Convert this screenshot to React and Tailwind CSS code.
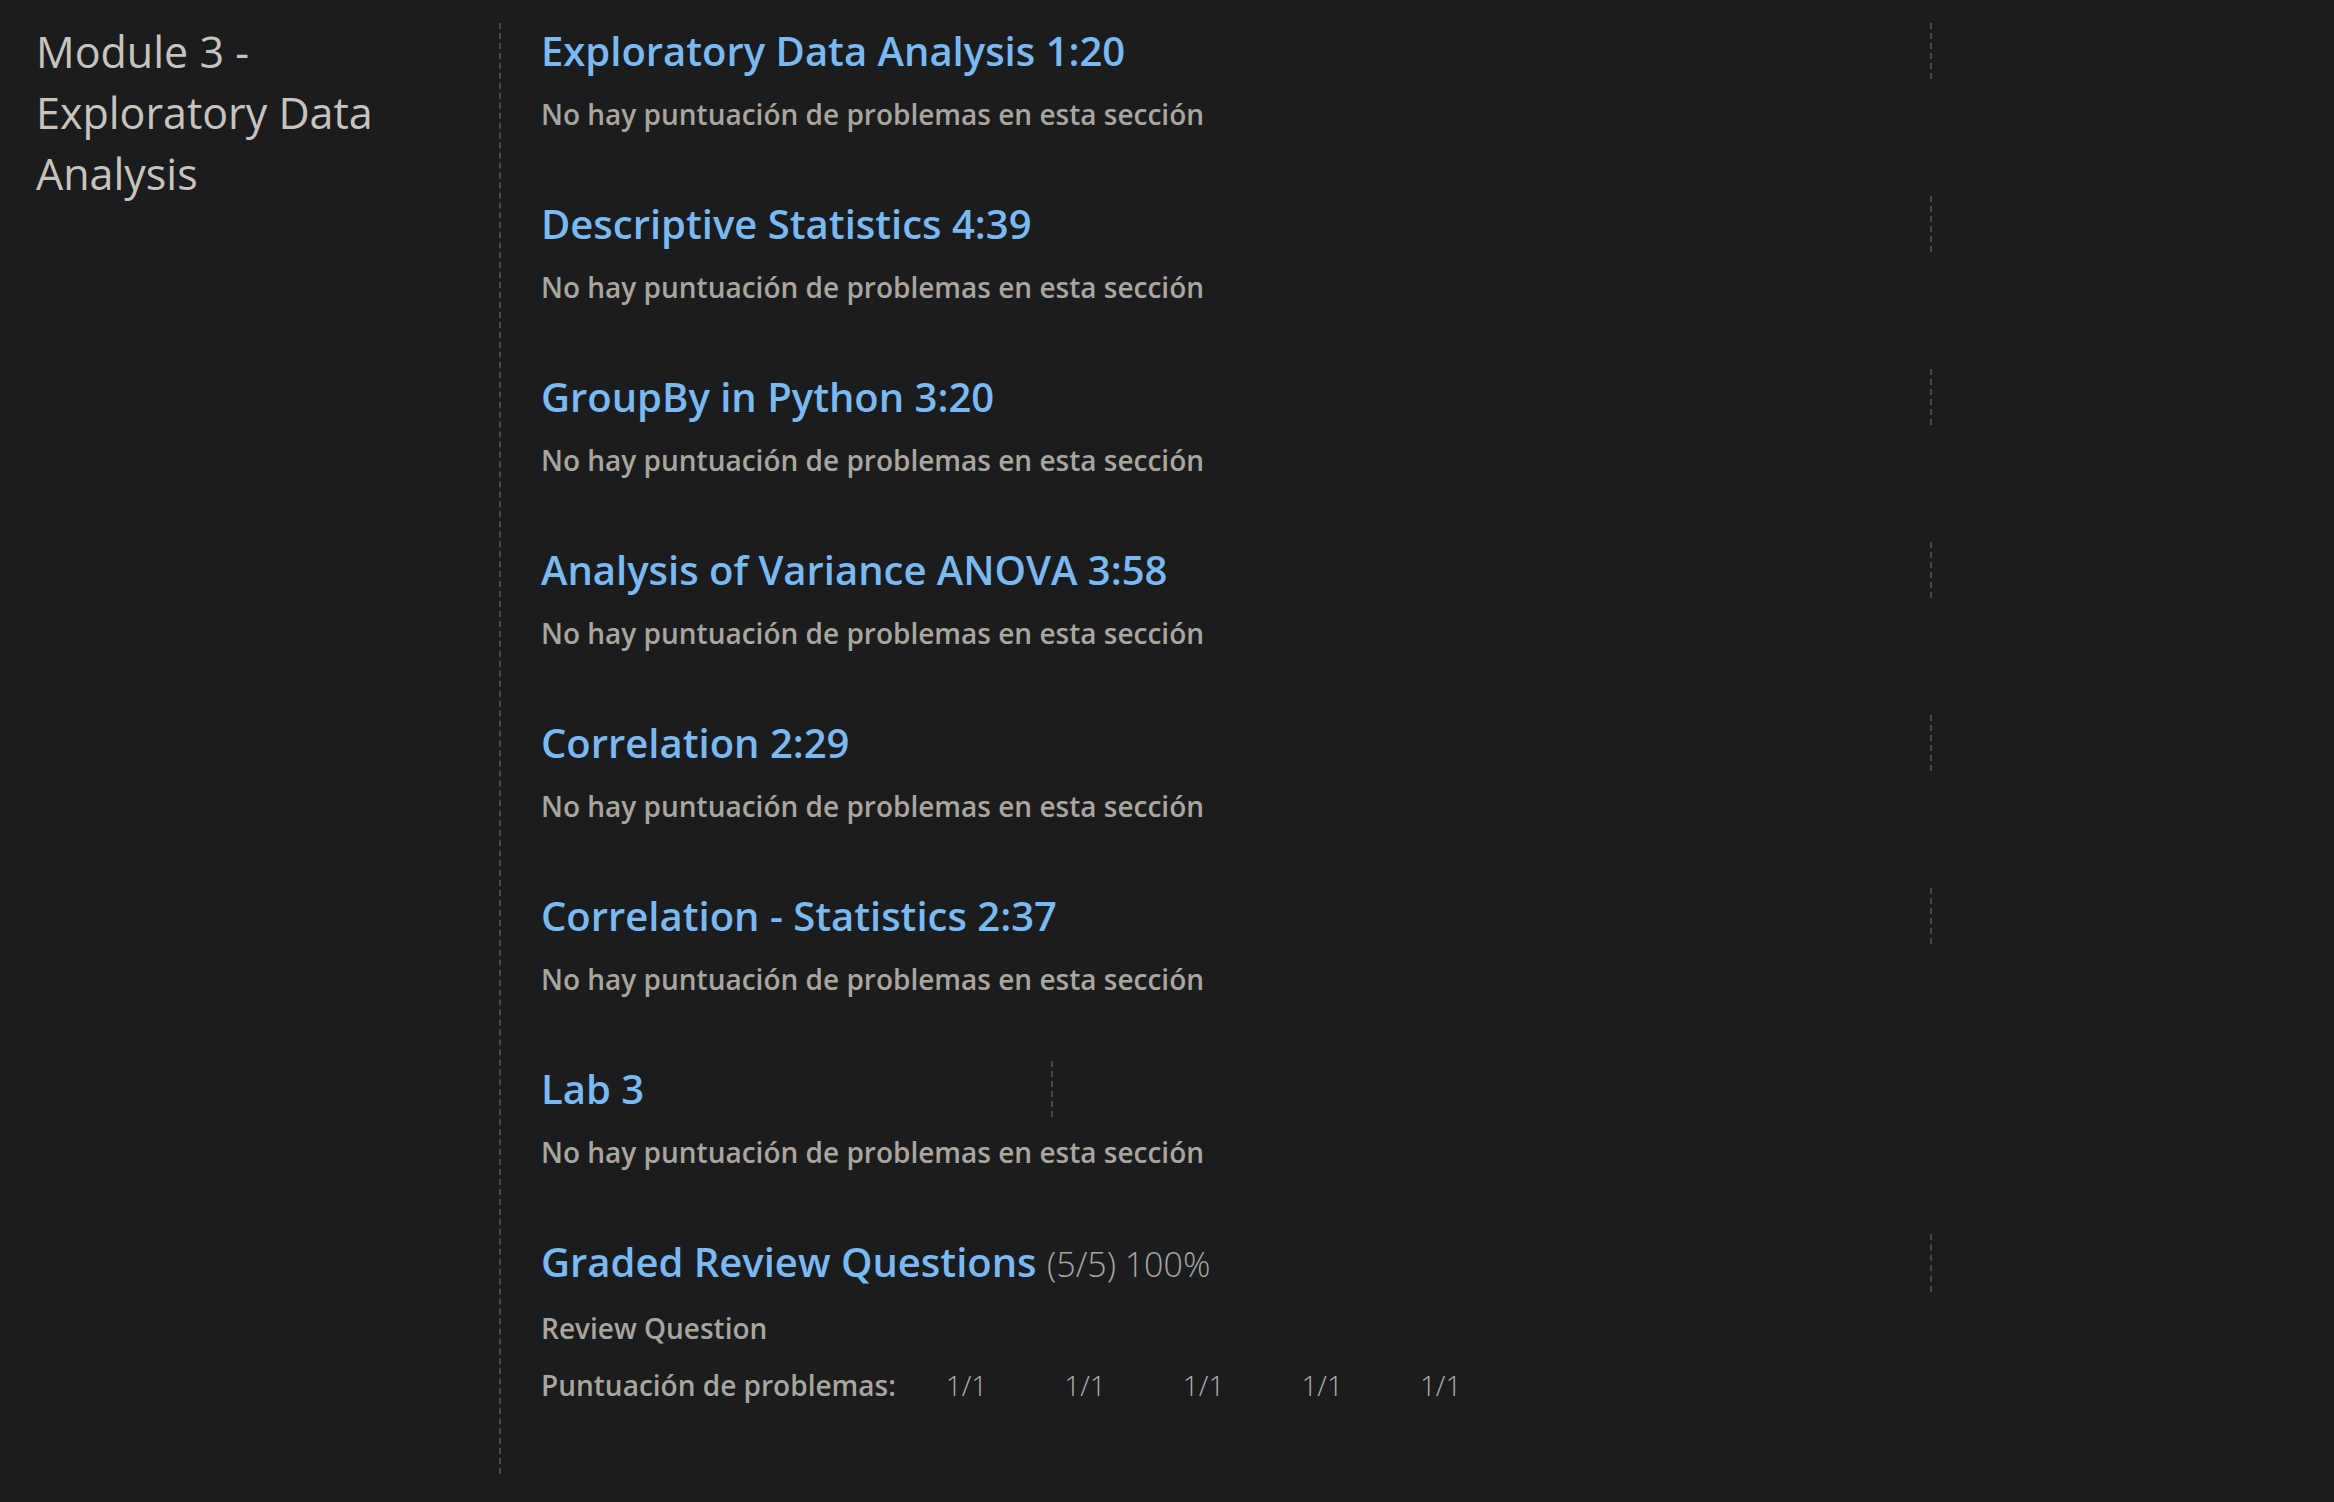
import React from 'react';

const sections = [
    { title: 'Exploratory Data Analysis 1:20' },
    { title: 'Descriptive Statistics 4:39' },
    { title: 'GroupBy in Python 3:20' },
    { title: 'Analysis of Variance ANOVA 3:58' },
    { title: 'Correlation 2:29' },
    { title: 'Correlation - Statistics 2:37' },
    { title: 'Lab 3', short: true },
];

const scores = ['1/1', '1/1', '1/1', '1/1', '1/1'];

const App = () => {
    return (
        <div className="min-h-screen w-full bg-[#1b1c1e] pt-[23px] font-['Open_Sans',sans-serif]">
            <div className="flex">
                {/* chapter name */}
                <div className="w-[499px] shrink-0 pl-[36px] pr-[40px] -mt-[2px]">
                    <h2 className="text-[43px] leading-[61px] font-normal text-[#c8c4bd]">
                        Module 3 - Exploratory Data Analysis
                    </h2>
                </div>

                {/* sections */}
                <div className="border-l-2 border-dashed border-[#48494b] pl-[40px] pb-[69px]">
                    {sections.map((s, index) => (
                        <div key={index} className="mb-[62px]">
                            <div
                                className={`flex items-center h-[56px] border-r-2 border-dashed border-[#48494b] ${s.short ? 'w-[512px]' : 'w-[1391px]'}`}
                            >
                                <h3 className="text-[40px] leading-[56px] font-semibold text-[#7ab9f2]">{s.title}</h3>
                            </div>
                            <p className="mt-[15px] text-[28px] leading-[40px] font-semibold text-[#aaa59d]">
                                No hay puntuación de problemas en esta sección
                            </p>
                        </div>
                    ))}

                    <div>
                        <div className="flex items-center h-[58px] w-[1391px] border-r-2 border-dashed border-[#48494b]">
                            <h3 className="text-[40px] leading-[58px] font-semibold text-[#7ab9f2]">
                                Graded Review Questions{' '}
                                <span className="text-[34px] font-light text-[#aaa59d]">(5/5) 100%</span>
                            </h3>
                        </div>
                        <p className="mt-[16px] text-[28px] leading-[40px] font-semibold text-[#aaa59d]">Review Question</p>
                        <div className="mt-[17px] flex items-center text-[28px] leading-[40px] text-[#aaa59d]">
                            <span className="font-semibold mr-[50px]">Puntuación de problemas:</span>
                            <div className="flex gap-[77px]">
                                {scores.map((sc, i) => (
                                    <span key={i} className="font-light text-[#b4afa7]">{sc}</span>
                                ))}
                            </div>
                        </div>
                    </div>
                </div>
            </div>
        </div>
    );
};

export default App;
